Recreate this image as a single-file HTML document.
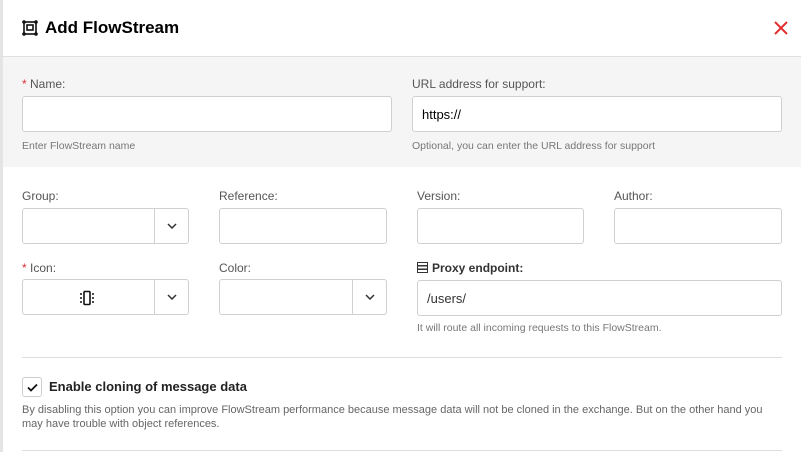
<!DOCTYPE html><html><head><style>
*{box-sizing:border-box;margin:0;padding:0}
body{width:801px;height:452px;overflow:hidden;background:#fff;font-family:"Liberation Sans",sans-serif;position:relative;color:#000}
.a{position:absolute}
.lbl{font-size:12px;color:#555}
.lbl b{color:#e03030;font-weight:normal}
.in{border:1px solid #d0d0d0;border-radius:3px;background:#fff;font-size:13px;padding-left:9px;display:flex;align-items:center}
.hp{font-size:10.5px;color:#777}
.dd{position:absolute;right:0;top:0;bottom:0;width:34px;border-left:1px solid #d0d0d0;display:flex;align-items:center;justify-content:center}
</style></head><body>
<div class="a" style="left:0;top:0;width:3px;height:452px;background:#e4e4e4"></div>
<div class="a" style="left:3px;top:56px;width:798px;height:111px;background:#f5f5f5;border-top:1px solid #e0e0e0"></div>
<svg class="a" style="left:22px;top:20px" width="16" height="16" viewBox="0 0 16 16" fill="none" stroke="#111" stroke-width="1.6"><rect x="2" y="2" width="12" height="12"/><rect x="5" y="5" width="6" height="5"/><circle cx="2" cy="2" r="1" fill="#111"/><circle cx="14" cy="2" r="1" fill="#111"/><circle cx="2" cy="14" r="1" fill="#111"/><circle cx="14" cy="14" r="1" fill="#111"/></svg>
<div class="a" style="left:45px;top:18px;font-size:17px;font-weight:bold">Add FlowStream</div>
<svg class="a" style="left:774px;top:21px" width="14" height="14" viewBox="0 0 14 14" stroke="#e03030" stroke-width="2"><path d="M1 1L13 13M13 1L1 13"/></svg>

<div class="a lbl" style="left:22px;top:77px"><b>*</b> Name:</div>
<div class="a in" style="left:22px;top:96px;width:370px;height:36px"></div>
<div class="a hp" style="left:22px;top:140px">Enter FlowStream name</div>
<div class="a lbl" style="left:412px;top:77px">URL address for support:</div>
<div class="a in" style="left:412px;top:96px;width:370px;height:36px">https://</div>
<div class="a hp" style="left:412px;top:140px">Optional, you can enter the URL address for support</div>

<div class="a lbl" style="left:22px;top:189px">Group:</div>
<div class="a in" style="left:22px;top:208px;width:167px;height:36px"><div class="dd"><svg width="10" height="6" viewBox="0 0 10 6" fill="none" stroke="#333" stroke-width="1.5"><path d="M1 1l4 4 4-4"/></svg></div></div>
<div class="a lbl" style="left:219px;top:189px">Reference:</div>
<div class="a in" style="left:219px;top:208px;width:168px;height:36px"></div>
<div class="a lbl" style="left:417px;top:189px">Version:</div>
<div class="a in" style="left:417px;top:208px;width:167px;height:36px"></div>
<div class="a lbl" style="left:614px;top:189px">Author:</div>
<div class="a in" style="left:614px;top:208px;width:168px;height:36px"></div>

<div class="a lbl" style="left:22px;top:261px"><b>*</b> Icon:</div>
<div class="a in" style="left:22px;top:279px;width:167px;height:36px;padding:0">
<svg style="position:absolute;left:57px;top:10px" width="14" height="16" viewBox="0 0 14 16" fill="none" stroke="#111" stroke-width="1.6"><rect x="4" y="1.5" width="6" height="13" rx="1"/><path d="M0 4h2M0 8h2M0 12h2M12 4h2M12 8h2M12 12h2"/></svg>
<div class="dd"><svg width="10" height="6" viewBox="0 0 10 6" fill="none" stroke="#333" stroke-width="1.5"><path d="M1 1l4 4 4-4"/></svg></div></div>
<div class="a lbl" style="left:219px;top:261px">Color:</div>
<div class="a in" style="left:219px;top:279px;width:168px;height:36px"><div class="dd"><svg width="10" height="6" viewBox="0 0 10 6" fill="none" stroke="#333" stroke-width="1.5"><path d="M1 1l4 4 4-4"/></svg></div></div>
<svg class="a" style="left:417px;top:262px" width="11" height="11" viewBox="0 0 11 11" fill="none" stroke="#333" stroke-width="1"><rect x=".5" y=".5" width="10" height="3"/><rect x=".5" y="4" width="10" height="3"/><rect x=".5" y="7.5" width="10" height="3"/></svg>
<div class="a" style="left:432px;top:261px;font-size:12px;font-weight:bold;color:#333">Proxy endpoint:</div>
<div class="a in" style="left:417px;top:280px;width:365px;height:36px;color:#333">/users/</div>
<div class="a hp" style="left:417px;top:322px">It will route all incoming requests to this FlowStream.</div>

<div class="a" style="left:22px;top:357px;width:760px;height:1px;background:#ddd"></div>
<div class="a" style="left:22px;top:377px;width:20px;height:20px;border:1px solid #ccc;border-radius:3px;background:#fff"><svg style="position:absolute;left:4px;top:5px" width="11" height="9" viewBox="0 0 11 9" fill="none" stroke="#111" stroke-width="1.8"><path d="M1 4.5l3 3 6-6"/></svg></div>
<div class="a" style="left:49px;top:379px;font-size:13px;font-weight:bold;color:#222">Enable cloning of message data</div>
<div class="a" style="left:22px;top:403px;font-size:11px;color:#666;line-height:14px;width:760px">By disabling this option you can improve FlowStream performance because message data will not be cloned in the exchange. But on the other hand you may have trouble with object references.</div>
<div class="a" style="left:22px;top:450px;width:760px;height:1px;background:#ddd"></div>
</body></html>
